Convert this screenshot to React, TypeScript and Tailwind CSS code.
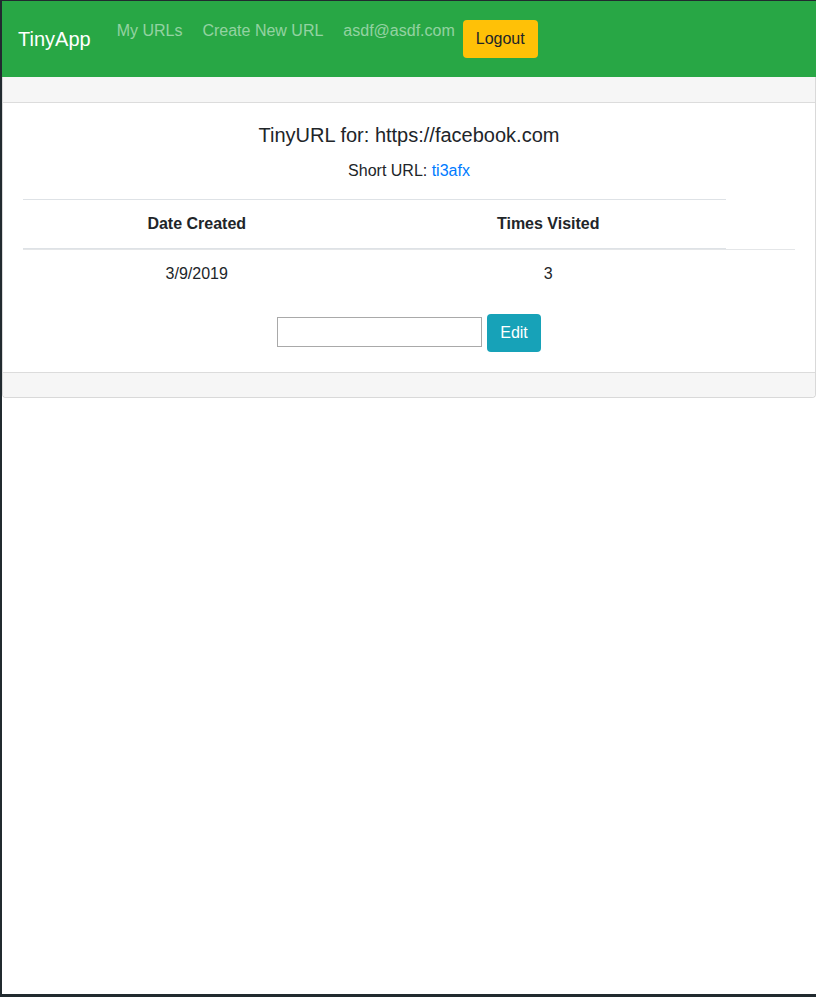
export default function App() {
  return (
    <div className="min-h-screen h-[997px] box-border bg-[#212a2f] pl-[2px] pt-[1px] pb-[3px] font-['Liberation_Sans',Arial,sans-serif] text-[#212529]">
      <div className="h-full bg-white flex flex-col">
        {/* navbar */}
        <nav className="h-[76px] bg-[#28a745] flex items-start px-4">
          <span className="text-white text-[20px] leading-[30px] mt-[23px] mr-[26px]">TinyApp</span>
          <a className="text-white/50 text-base leading-6 mt-[18px]">My URLs</a>
          <a className="text-white/50 text-base leading-6 mt-[18px] ml-5">Create New URL</a>
          <a className="text-white/50 text-base leading-6 mt-[18px] ml-5">asdf@asdf.com</a>
          <button className="ml-2 mt-[19px] h-[38px] px-[13px] rounded bg-[#ffc107] text-[#212529] text-base">Logout</button>
        </nav>

        {/* card */}
        <div className="border border-[#d9d9d9] border-t-0 rounded-b bg-white">
          <div className="h-[26px] bg-[#f6f6f6] border-b border-[#dcdcdc]"></div>
          <div className="px-5 pt-5 pb-5 text-center">
            <h5 className="text-[20px] leading-6">TinyURL for: https://facebook.com</h5>
            <p className="mt-[12px] text-base leading-6">
              Short URL: <a className="text-[#007bff]">ti3afx</a>
            </p>
            <div className="mt-[16px]">
              <div className="w-[703px] flex border-t border-[#dee2e6] border-b-2 border-b-[#dee2e6] font-bold">
                <div className="w-1/2 py-3 pr-1 leading-6">Date Created</div>
                <div className="w-1/2 py-3 pr-1 leading-6">Times Visited</div>
              </div>
              <div className="border-t border-[#e4e6e8] -mt-px">
                <div className="w-[703px] flex">
                  <div className="w-1/2 py-3 pr-1 leading-6">3/9/2019</div>
                  <div className="w-1/2 py-3 pr-1 leading-6">3</div>
                </div>
              </div>
            </div>
            <form className="mt-4 flex justify-center items-start gap-[5px]" onSubmit={(e) => e.preventDefault()}>
              <input className="mt-[3px] w-[205px] h-[30px] border border-[#a9a9a9] outline-none" />
              <button className="h-[38px] px-[13px] rounded bg-[#17a2b8] text-white text-base">Edit</button>
            </form>
          </div>
          <div className="h-[25px] bg-[#f6f6f6] border-t border-[#dcdcdc] rounded-b"></div>
        </div>
      </div>
    </div>
  );
}
